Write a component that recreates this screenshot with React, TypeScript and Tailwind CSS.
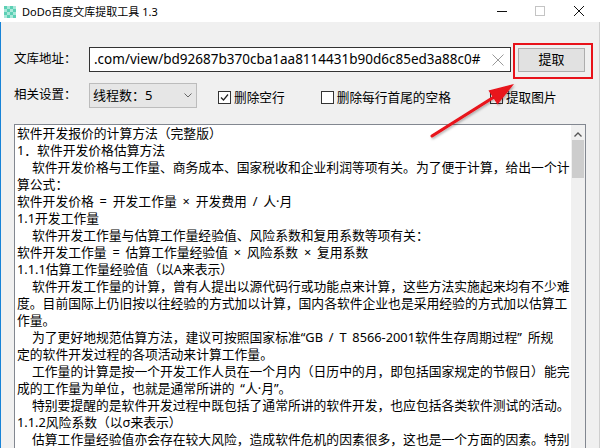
import React from 'react';

const lines: { text: string; indent?: boolean }[] = [
  { text: '软件开发报价的计算方法（完整版）' },
  { text: '1．软件开发价格估算方法' },
  { text: '软件开发价格与工作量、商务成本、国家税收和企业利润等项有关。为了便于计算，给出一个计', indent: true },
  { text: '算公式：' },
  { text: '软件开发价格 = 开发工作量 × 开发费用 / 人·月' },
  { text: '1.1开发工作量' },
  { text: '软件开发工作量与估算工作量经验值、风险系数和复用系数等项有关：', indent: true },
  { text: '软件开发工作量 = 估算工作量经验值 × 风险系数 × 复用系数' },
  { text: '1.1.1估算工作量经验值（以A来表示）' },
  { text: '软件开发工作量的计算，曾有人提出以源代码行或功能点来计算，这些方法实施起来均有不少难', indent: true },
  { text: '度。目前国际上仍旧按以往经验的方式加以计算，国内各软件企业也是采用经验的方式加以估算工' },
  { text: '作量。' },
  { text: '为了更好地规范估算方法，建议可按照国家标准“GB / T 8566-2001软件生存周期过程” 所规', indent: true },
  { text: '定的软件开发过程的各项活动来计算工作量。' },
  { text: '工作量的计算是按一个开发工作人员在一个月内（日历中的月，即包括国家规定的节假日）能完', indent: true },
  { text: '成的工作量为单位，也就是通常所讲的 “人·月”。' },
  { text: '特别要提醒的是软件开发过程中既包括了通常所讲的软件开发，也应包括各类软件测试的活动。', indent: true },
  { text: '1.1.2风险系数（以σ来表示）' },
  { text: '估算工作量经验值亦会存在较大风险，造成软件危机的因素很多，这也是一个方面的因素。特别', indent: true },
];

function AppIcon() {
  const cells = [];
  for (let r = 0; r < 4; r++) {
    for (let c = 0; c < 4; c++) {
      cells.push(
        <rect key={`${r}-${c}`} x={c * 3} y={r * 3} width={3} height={3} fill={(r + c) % 2 === 0 ? '#5ccfb4' : '#a9e8d9'} />
      );
    }
  }
  return (
    <svg width="12" height="12" viewBox="0 0 12 12">
      {cells}
    </svg>
  );
}

function CheckBox({ checked, label }: { checked?: boolean; label: string }) {
  return (
    <div className="flex items-center gap-[3px]">
      <div className="w-[13px] h-[13px] border border-[#333] bg-white flex items-center justify-center">
        {checked && (
          <svg width="9" height="9" viewBox="0 0 9 9">
            <path d="M1 4.5 L3.5 7 L8 1.5" fill="none" stroke="#222" strokeWidth="1.2" />
          </svg>
        )}
      </div>
      <span className="text-[12.7px] text-black leading-none">{label}</span>
    </div>
  );
}

export default function App() {
  return (
    <div className="relative w-[600px] h-[448px] overflow-hidden bg-[#f0f0f0] font-['Noto_Sans','Noto_Sans_CJK_SC',sans-serif] text-black">
      {/* title bar */}
      <div className="h-[22px] bg-white flex items-center">
        <div className="ml-[4px] mt-[1px]">
          <AppIcon />
        </div>
        <span className="ml-[6px] text-[11px] leading-none">DoDo百度文库提取工具 1.3</span>
        <div className="ml-auto flex items-center">
          <svg width="10" height="10" viewBox="0 0 10 10" className="mr-[28px]">
            <path d="M0 5.5 H10" stroke="#111" strokeWidth="1" />
          </svg>
          <svg width="10" height="10" viewBox="0 0 10 10" className="mr-[29px]">
            <rect x="0.5" y="0.5" width="9" height="9" fill="none" stroke="#c4c4c4" strokeWidth="1" />
          </svg>
          <svg width="10" height="10" viewBox="0 0 10 10" className="mr-[16px]">
            <path d="M0 0 L10 10 M10 0 L0 10" stroke="#111" strokeWidth="1" />
          </svg>
        </div>
      </div>

      {/* body */}
      <div className="h-[426px] border-l border-[#1883d7] border-r border-r-[#cfcfcf] pl-[13px]">
        <div className="pt-[25px] flex items-center h-[50px]">
          <span className="w-[75px] text-[12.5px]">文库地址：</span>
          <div className="w-[422px] h-[25px] border border-[#333] bg-white flex items-center overflow-hidden">
            <span className="flex-1 min-w-0 overflow-hidden whitespace-nowrap text-[13.5px] pl-[4px]">.com/view/bd92687b370cba1aa8114431b90d6c85ed3a88c0#</span>
            <svg width="12" height="12" viewBox="0 0 12 12" className="mr-[6px] ml-[6px] shrink-0">
              <path d="M0.5 0.5 L11.5 11.5 M11.5 0.5 L0.5 11.5" stroke="#9a9a9a" strokeWidth="1" />
            </svg>
          </div>
          <button className="ml-[7px] w-[67px] h-[24px] bg-[#e1e1e1] border border-[#adadad] text-[13px] flex items-center justify-center">
            提取
          </button>
        </div>

        <div className="mt-[11px] flex items-center h-[25px]">
          <span className="w-[75px] text-[12.5px]">相关设置：</span>
          <div className="w-[108px] h-[25px] border border-[#bcbcbc] bg-[#e6e6e6] flex items-center pl-[3px] pr-[4px]">
            <span className="text-[13px]">线程数：5</span>
            <svg width="8" height="5" viewBox="0 0 8 5" className="ml-auto">
              <path d="M0.5 0.5 L4 4 L7.5 0.5" fill="none" stroke="#666" strokeWidth="1" />
            </svg>
          </div>
          <div className="ml-[21px] mt-[3px]">
            <CheckBox checked label="删除空行" />
          </div>
          <div className="ml-[36px] mt-[3px]">
            <CheckBox label="删除每行首尾的空格" />
          </div>
          <div className="ml-[39px] mt-[3px]">
            <CheckBox label="提取图片" />
          </div>
        </div>

        <div className="mt-[16px] w-[572px] h-[340px] border border-[#828790] bg-white flex">
          <div className="flex-1 min-w-0 overflow-hidden pl-[2px] text-[12.8px] leading-[17px] [word-spacing:2.5px]">
            {lines.map((l, i) => (
              <div key={i} className={`whitespace-pre ${l.indent ? 'pl-[15px]' : ''}`}>
                {l.text}
              </div>
            ))}
          </div>
          <div className="w-[14px] bg-[#f0f0f0] flex flex-col items-center">
            <svg width="8" height="5" viewBox="0 0 8 5" className="mt-[7px]">
              <path d="M0.5 4.5 L4 1 L7.5 4.5" fill="none" stroke="#555" strokeWidth="1.3" />
            </svg>
            <div className="mt-[3px] w-[12px] h-[38px] bg-[#cdcdcd]" />
          </div>
        </div>
      </div>

      {/* annotation: red box + arrow */}
      <div className="absolute left-[513px] top-[43px] w-[80px] h-[36px] border-2 border-[#e8121a] pointer-events-none" />
      <svg className="absolute left-0 top-0 pointer-events-none" width="600" height="448" viewBox="0 0 600 448">
        <defs>
          <filter id="sh" x="-20%" y="-20%" width="140%" height="140%">
            <feDropShadow dx="1" dy="1.5" stdDeviation="1" floodColor="#000" floodOpacity="0.3" />
          </filter>
        </defs>
        <g filter="url(#sh)">
          <line x1="432" y1="136" x2="494" y2="97" stroke="#e8121a" strokeWidth="3.2" strokeLinecap="round" />
          <polygon points="514,84 497.5,104.5 488.5,90.5" fill="#e8121a" />
        </g>
      </svg>
    </div>
  );
}
